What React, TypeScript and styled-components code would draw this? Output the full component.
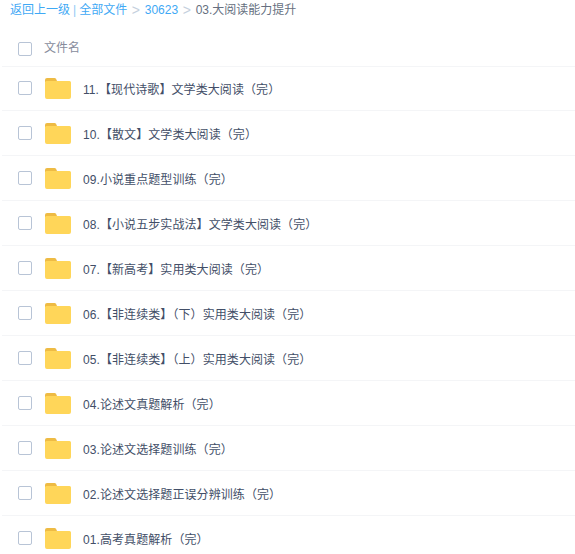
import styled, { createGlobalStyle } from "styled-components";

const files = [
  "11.【现代诗歌】文学类大阅读（完）",
  "10.【散文】文学类大阅读（完）",
  "09.小说重点题型训练（完）",
  "08.【小说五步实战法】文学类大阅读（完）",
  "07.【新高考】实用类大阅读（完）",
  "06.【非连续类】（下）实用类大阅读（完）",
  "05.【非连续类】（上）实用类大阅读（完）",
  "04.论述文真题解析（完）",
  "03.论述文选择题训练（完）",
  "02.论述文选择题正误分辨训练（完）",
  "01.高考真题解析（完）",
];

function FolderIcon() {
  return (
    <svg width="26" height="21" viewBox="0 0 26 21">
      <path d="M0 2a2 2 0 0 1 2-2h7.5a2 2 0 0 1 1.5.7L12.5 4H0z" fill="#eebb44" />
      <path
        d="M0 4.5a1.5 1.5 0 0 1 1.5-1.5h23a1.5 1.5 0 0 1 1.5 1.5V19a2 2 0 0 1-2 2H2a2 2 0 0 1-2-2z"
        fill="#ffd659"
      />
    </svg>
  );
}

export default function App() {
  return (
    <>
      <GlobalStyle />
      <StyledPage>
        <StyledCrumbs>
          <StyledLink>返回上一级</StyledLink>
          <StyledBar>|</StyledBar>
          <StyledLink>全部文件</StyledLink>
          <StyledArrow>&gt;</StyledArrow>
          <StyledLink>30623</StyledLink>
          <StyledArrow>&gt;</StyledArrow>
          <StyledCurrent>03.大阅读能力提升</StyledCurrent>
        </StyledCrumbs>
        <StyledHeadRow>
          <StyledCheck />
          <StyledHeadLabel>文件名</StyledHeadLabel>
        </StyledHeadRow>
        {files.map((name) => (
          <StyledRow key={name}>
            <StyledCheck />
            <StyledIcon>
              <FolderIcon />
            </StyledIcon>
            <StyledName>{name}</StyledName>
          </StyledRow>
        ))}
      </StyledPage>
    </>
  );
}

const GlobalStyle = createGlobalStyle`
  html, body {
    margin: 0;
    height: 100%;
    background: #ffffff;
    overflow: hidden;
  }
`;

const StyledPage = styled.div`
  width: 575px;
  height: 554px;
  overflow: hidden;
  font-family: "Liberation Sans", "Noto Sans CJK SC", sans-serif;
  font-size: 12px;
  line-height: 18px;
`;

const StyledCrumbs = styled.div`
  display: flex;
  align-items: center;
  box-sizing: border-box;
  height: 18px;
  padding: 2px 0 0 10px;
  white-space: nowrap;
`;

const StyledLink = styled.span`
  color: #3fa9f5;
`;

const StyledBar = styled.span`
  color: #8cc8f5;
  margin: 0 3px;
`;

const StyledArrow = styled.span`
  color: #c5d0dd;
  font-size: 14px;
  margin: 0 4.7px;
`;

const StyledCurrent = styled.span`
  color: #666f80;
`;

const StyledHeadRow = styled.div`
  display: flex;
  align-items: center;
  box-sizing: border-box;
  height: 48px;
  margin-left: 2px;
  padding: 14px 0 0 16px;
  box-shadow: 0 1px 0 #f4f5f7;
`;

const StyledCheck = styled.span`
  flex: none;
  box-sizing: border-box;
  width: 14px;
  height: 14px;
  border: 1px solid #b8c4d6;
  border-radius: 2px;
  background: #ffffff;
`;

const StyledHeadLabel = styled.span`
  margin-left: 12px;
  margin-top: -2px;
  color: #878c9c;
`;

const StyledRow = styled.div`
  display: flex;
  align-items: center;
  box-sizing: border-box;
  height: 45px;
  margin-left: 2px;
  padding-left: 16px;
  border-bottom: 1px solid #f4f5f7;
`;

const StyledIcon = styled.span`
  display: flex;
  margin-left: 13px;
  margin-top: 1px;
`;

const StyledName = styled.span`
  margin-left: 12px;
  margin-top: 4px;
  color: #424e67;
  letter-spacing: 0.08px;
  white-space: nowrap;
`;
